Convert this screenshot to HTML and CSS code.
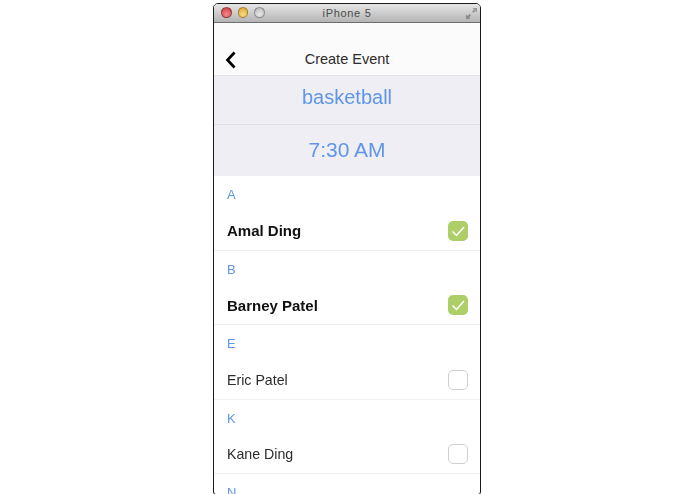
FILE: index.html
```html
<!DOCTYPE html>
<html lang="en">
<head>
<meta charset="utf-8">
<title>Create Event</title>
<link rel="stylesheet" href="styles.css">
</head>
<body>
<div class="window">
  <header class="titlebar">
    <div class="lights">
      <span class="light red"></span>
      <span class="light yellow"></span>
      <span class="light gray"></span>
    </div>
    <span class="title">iPhone 5</span>
    <svg class="expand" width="13" height="13" viewBox="0 0 13 13" aria-hidden="true">
      <path d="M7.5 1H12V5.5L10.5 4L8.5 6L7 4.5L9 2.5Z" fill="#9a9a9a"/>
      <path d="M5.5 12H1V7.5L2.5 9L4.5 7L6 8.5L4 10.5Z" fill="#8a8a8a"/>
    </svg>
  </header>
  <nav class="nav">
    <svg class="back" width="12" height="18" viewBox="0 0 12 18" aria-hidden="true">
      <path d="M9.5 1.5L2.5 9L9.5 16.5" fill="none" stroke="#000" stroke-width="2.7"/>
    </svg>
    <span class="nav-title">Create Event</span>
  </nav>
  <section class="summary">
    <div class="field field-name">basketball</div>
    <div class="field field-time">7:30 AM</div>
  </section>
  <section class="list">
    <div class="letter">A</div>
    <div class="row">
      <span class="name selected">Amal Ding</span>
      <span class="check on"><svg width="20" height="20" viewBox="0 0 20 20" aria-hidden="true"><path d="M4.5 10.5L8.5 14.5L16 6" fill="none" stroke="#fff" stroke-width="1.5"/></svg></span>
    </div>
    <div class="letter">B</div>
    <div class="row">
      <span class="name selected">Barney Patel</span>
      <span class="check on"><svg width="20" height="20" viewBox="0 0 20 20" aria-hidden="true"><path d="M4.5 10.5L8.5 14.5L16 6" fill="none" stroke="#fff" stroke-width="1.5"/></svg></span>
    </div>
    <div class="letter">E</div>
    <div class="row">
      <span class="name">Eric Patel</span>
      <span class="check"></span>
    </div>
    <div class="letter">K</div>
    <div class="row">
      <span class="name">Kane Ding</span>
      <span class="check"></span>
    </div>
    <div class="letter">N</div>
  </section>
</div>
</body>
</html>
```
FILE: styles.css
```css
html, body {
  margin: 0;
  height: 100%;
  background: #fff;
  overflow: hidden;
}
body {
  font-family: "Liberation Sans", Arial, sans-serif;
}
.window {
  width: 266px;
  height: 490px;
  margin: 3px 0 0 213px;
  border: 1px solid #1a1a1a;
  border-radius: 5px 5px 3px 3px;
  overflow: hidden;
  background: #fff;
  filter: blur(0.5px);
}
.titlebar {
  height: 18px;
  display: flex;
  align-items: center;
  justify-content: center;
  position: relative;
  background: linear-gradient(#e6e6e6, #b4b4b4);
  border-bottom: 1px solid #6e6e6e;
}
.lights {
  position: absolute;
  left: 7px;
  top: 3px;
  display: flex;
  gap: 6px;
}
.light {
  width: 10.5px;
  height: 10.5px;
  border-radius: 50%;
  border: 0.5px solid rgba(0,0,0,.3);
  box-sizing: border-box;
}
.red { background: radial-gradient(circle at 50% 70%, #f58a8a, #c8383c); }
.yellow { background: radial-gradient(circle at 50% 70%, #fbdc80, #d9a02c); }
.gray { background: radial-gradient(circle at 50% 70%, #e8e8e8, #b4b4b4); }
.title {
  font-size: 11px;
  letter-spacing: 0.7px;
  color: #4a4a4a;
}
.expand {
  position: absolute;
  right: 2px;
  top: 3px;
}
.nav {
  height: 52px;
  position: relative;
  display: flex;
  align-items: flex-end;
  justify-content: center;
  background: #fbfbfb;
  border-bottom: 1px solid #e3e3ea;
}
.back {
  position: absolute;
  left: 11px;
  bottom: 6px;
}
.nav-title {
  font-size: 14.5px;
  line-height: 18px;
  margin-bottom: 7px;
  color: #2c2c2c;
}
.summary {
  background: #eeeef4;
  color: #5f96e6;
  text-align: center;
}
.field-name {
  height: 48px;
  line-height: 43px;
  font-size: 20px;
  border-bottom: 1px solid #dfdfe5;
}
.field-time {
  height: 51px;
  line-height: 50px;
  font-size: 21px;
}
.letter {
  height: 36px;
  line-height: 38px;
  padding-left: 13px;
  font-size: 13px;
  color: #5f96e6;
}
.row {
  height: 37.5px;
  display: flex;
  align-items: center;
  justify-content: space-between;
  padding: 0 12px 0 13px;
  border-bottom: 1px solid #f0f0f0;
}
.name {
  font-size: 14.2px;
  color: #2c2c2c;
}
.selected {
  font-size: 15px;
  font-weight: 700;
  color: #111;
}
.check {
  width: 20px;
  height: 20px;
  box-sizing: border-box;
  border-radius: 5px;
  border: 1px solid #cfcfcf;
  background: #fff;
  display: flex;
  align-items: center;
  justify-content: center;
}
.check.on {
  background: #aecf67;
  border: 0;
}
.check svg {
  flex: none;
}
```
